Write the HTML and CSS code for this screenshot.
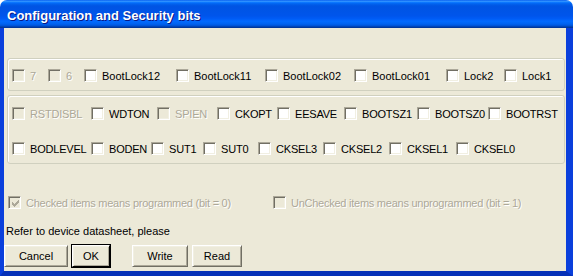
FILE: index.html
```html
<!DOCTYPE html>
<html lang="en">
<head>
    <meta charset="UTF-8">
    <title>Configuration and Security bits</title>
    <link rel="stylesheet" href="styles.css">
</head>
<body>

    <div class="window">
        <div class="titlebar">
            <span class="titlebar__text">Configuration and Security bits</span>
        </div>

        <div class="client">
            <div class="group group--lock">
                <div class="bits bits--lock">
                    <label class="check check--disabled"><span class="check__box"></span>7</label>
                    <label class="check check--disabled"><span class="check__box"></span>6</label>
                    <label class="check"><span class="check__box"></span>BootLock12</label>
                    <label class="check"><span class="check__box"></span>BootLock11</label>
                    <label class="check"><span class="check__box"></span>BootLock02</label>
                    <label class="check"><span class="check__box"></span>BootLock01</label>
                    <label class="check"><span class="check__box"></span>Lock2</label>
                    <label class="check"><span class="check__box"></span>Lock1</label>
                </div>
            </div>

            <div class="group group--fuse">
                <div class="bits bits--high">
                    <label class="check check--disabled"><span class="check__box"></span>RSTDISBL</label>
                    <label class="check"><span class="check__box"></span>WDTON</label>
                    <label class="check check--disabled"><span class="check__box"></span>SPIEN</label>
                    <label class="check"><span class="check__box"></span>CKOPT</label>
                    <label class="check"><span class="check__box"></span>EESAVE</label>
                    <label class="check"><span class="check__box"></span>BOOTSZ1</label>
                    <label class="check"><span class="check__box"></span>BOOTSZ0</label>
                    <label class="check"><span class="check__box"></span>BOOTRST</label>
                </div>
                <div class="bits bits--low">
                    <label class="check"><span class="check__box"></span>BODLEVEL</label>
                    <label class="check"><span class="check__box"></span>BODEN</label>
                    <label class="check"><span class="check__box"></span>SUT1</label>
                    <label class="check"><span class="check__box"></span>SUT0</label>
                    <label class="check"><span class="check__box"></span>CKSEL3</label>
                    <label class="check"><span class="check__box"></span>CKSEL2</label>
                    <label class="check"><span class="check__box"></span>CKSEL1</label>
                    <label class="check"><span class="check__box"></span>CKSEL0</label>
                </div>
            </div>

            <div class="legend">
                <label class="check check--disabled legend__item">
                    <span class="check__box">
                        <svg class="check__mark" width="7" height="7" viewBox="0 0 7 7">
                            <path d="M0 2h1v1h1v1h1v-1h1v-1h1v-1h1v-1h1v3h-1v1h-1v1h-1v1h-1v1h-1v-1h-1v-1h-1z" fill="#aca899"/>
                        </svg>
                    </span>
                    Checked items means programmed (bit = 0)
                </label>
                <label class="check check--disabled"><span class="check__box"></span>UnChecked items means unprogrammed (bit = 1)</label>
            </div>

            <p class="note">Refer to device datasheet, please</p>

            <div class="buttons">
                <button class="button button--cancel">Cancel</button>
                <button class="button button--default">OK</button>
                <button class="button button--write">Write</button>
                <button class="button button--read">Read</button>
            </div>
        </div>
    </div>

</body>
</html>
```

FILE: styles.css
```css
html, body {
    margin: 0;
    background: #fff;
}

.window {
    width: 573px;
    height: 276px;
    display: flex;
    flex-direction: column;
    font-family: "Liberation Sans", Arial, sans-serif;
    font-size: 11px;
    color: #000;
}

/* barra de titulo estilo XP */
.titlebar {
    height: 28px;
    flex: none;
    display: flex;
    align-items: center;
    padding: 2px 0 0 7px;
    box-sizing: border-box;
    border-radius: 7px 7px 0 0;
    background: linear-gradient(to bottom, #0058ee 0%, #3593ff 4%, #288eff 6%, #127dff 8%, #036ffc 10%, #0262ee 14%, #0057e5 20%, #0054e3 24%, #0055eb 56%, #005bf5 66%, #026afe 76%, #0062ef 86%, #0052d6 92%, #0040ab 96%, #003092 100%);
}

.titlebar__text {
    color: #fff;
    font-weight: bold;
    font-size: 13px;
    text-shadow: 1px 1px 0 #0a1883;
}

.client {
    flex: 1;
    display: flex;
    flex-direction: column;
    background: #ece9d8;
    border-left: 4px solid #0a3fdc;
    border-right: 7px solid #0a3fdc;
    border-bottom: 5px solid #0631b8;
}

.group {
    width: 558px;
    box-sizing: border-box;
    margin-left: 3px;
    border: 1px solid #d0d0bf;
    border-radius: 3px;
    box-shadow: inset 1px 1px 0 #fff;
}

.group--lock {
    margin-top: 30px;
    padding: 10px 4px 8px;
}

.group--fuse {
    margin-top: 4px;
    padding: 11px 4px 8px;
    display: flex;
    flex-direction: column;
    gap: 22px;
}

.bits {
    display: grid;
    height: 13px;
}

.bits--lock {
    grid-template-columns: 36px 36px 92px 89px 89px 92px 58px auto;
}

.bits--high {
    grid-template-columns: 79px 66px 60px 60px 67px 73px 71px auto;
    letter-spacing: -0.2px;
}

.bits--low {
    grid-template-columns: 79px 60px 52px 55px 65px 66px 67px auto;
    letter-spacing: -0.2px;
}

.check {
    display: flex;
    align-items: center;
    gap: 5px;
    height: 13px;
    white-space: nowrap;
}

/* caixa afundada do checkbox classico */
.check__box {
    width: 13px;
    height: 13px;
    flex: none;
    box-sizing: border-box;
    display: flex;
    align-items: center;
    justify-content: center;
    border: 1px solid;
    border-color: #aca899 #fff #fff #aca899;
    box-shadow: inset 1px 1px 0 #716f64, inset -1px -1px 0 #f1efe2;
    background: #fff;
}

.check--disabled {
    color: #aca899;
    text-shadow: 1px 1px 0 #fff;
}

.check--disabled .check__box {
    background: #ece9d8;
}

.check__mark {
    display: block;
    margin: 1px 0 0 1px;
}

.legend {
    display: flex;
    margin: 32px 0 0 4px;
    letter-spacing: -0.25px;
}

.legend__item {
    width: 265px;
}

.note {
    margin: 16px 0 0 2px;
    line-height: 13px;
}

.buttons {
    display: flex;
    margin-top: 7px;
    gap: 4px;
}

.button {
    height: 22px;
    padding: 0;
    font: inherit;
    color: #000;
    background: #ece9d8;
    border: 1px solid;
    border-color: #fff #716f64 #716f64 #fff;
    box-shadow: inset 1px 1px 0 #f1efe2, inset -1px -1px 0 #aca899;
}

.button--cancel {
    width: 64px;
}

.button--default {
    width: 38px;
    outline: 1px solid #000;
    outline-offset: 0;
    border-color: #fff #000 #000 #fff;
}

.button--write {
    width: 56px;
    margin-left: 18px;
}

.button--read {
    width: 50px;
}
```
